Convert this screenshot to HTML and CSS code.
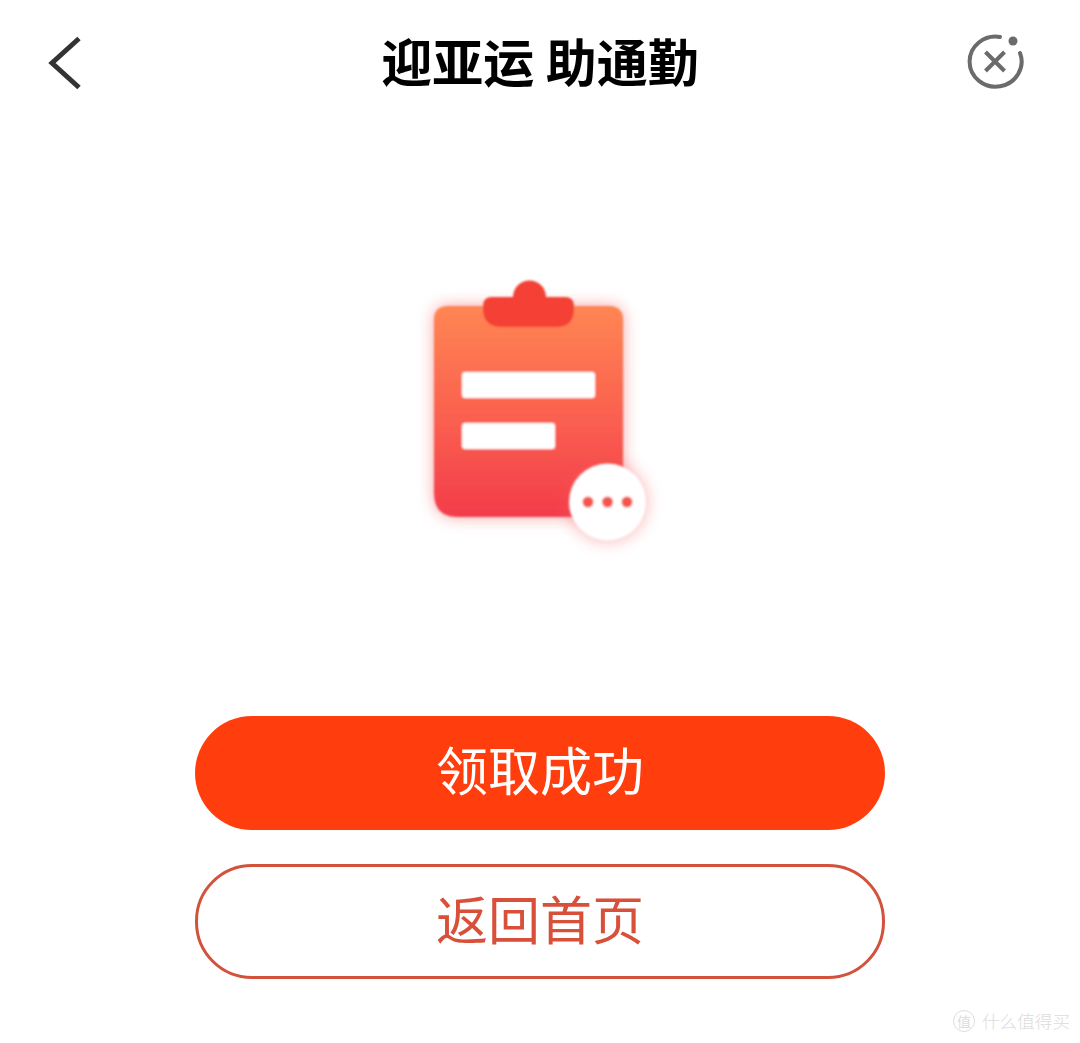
FILE: index.html
```html
<!DOCTYPE html>
<html lang="zh-CN">
<head>
<meta charset="utf-8">
<title>迎亚运 助通勤</title>
<link rel="stylesheet" href="styles.css">
</head>
<body>
<div class="page">
  <header class="nav">
    <svg class="nav-icon" width="36" height="60" viewBox="46 34 36 60" aria-label="返回">
      <path class="back-shape" d="M79 38.500 L52 63 L79 87.500"/>
    </svg>
    <h1 class="title">迎亚运 助通勤</h1>
    <svg class="nav-icon nav-end" width="58" height="60" viewBox="966 34 58 60" aria-label="关闭">
      <path class="close-ring" d="M1000 37 A26 25 0 1 0 1020 53"/>
      <circle class="close-dot" cx="1013" cy="41" r="4.500"/>
      <path class="close-x" d="M985.500 52 L1004.500 71 M1004.500 52 L985.500 71"/>
    </svg>
  </header>

  <main class="content">
    <svg class="clipboard" width="270" height="300" viewBox="405 260 270 300" role="img" aria-label="领取状态">
      <defs>
        <linearGradient id="board" x1="0" y1="0" x2="0" y2="1">
          <stop offset="0" stop-color="#ff8552"/>
          <stop offset="0.55" stop-color="#fa5f50"/>
          <stop offset="1" stop-color="#f33c4b"/>
        </linearGradient>
        <filter id="glow" x="-30%" y="-30%" width="160%" height="160%">
          <feGaussianBlur stdDeviation="8"/>
        </filter>
        <filter id="soft" x="-10%" y="-10%" width="120%" height="120%">
          <feGaussianBlur stdDeviation="0.800"/>
        </filter>
      </defs>
      <path d="M448 306 H609 Q623 306 623 320 V517 H458 Q434 517 434 493 V320 Q434 306 448 306 Z" fill="#f65a5a" opacity="0.55" filter="url(#glow)"/>
      <g filter="url(#soft)">
        <path d="M448 306 H609 Q623 306 623 320 V517 H458 Q434 517 434 493 V320 Q434 306 448 306 Z" fill="url(#board)"/>
        <path d="M513 297 A16.500 16.500 0 0 1 546 297 H565 Q574 297 574 306 V309 Q574 327 556 327 H503 Q483 327 483 309 V306 Q483 297 492 297 Z" fill="#f43f36"/>
        <rect x="462" y="372" width="133" height="26" rx="3" fill="#fff"/>
        <rect x="462" y="423" width="93" height="26" rx="3" fill="#fff"/>
      </g>
      <circle cx="607.500" cy="502" r="40" fill="#f65a5a" opacity="0.4" filter="url(#glow)"/>
      <g filter="url(#soft)">
        <circle cx="607.500" cy="502" r="38.500" fill="#fff"/>
        <circle cx="588" cy="502" r="5.500" fill="#f4574f"/>
        <circle cx="607.500" cy="502" r="5.500" fill="#f4574f"/>
        <circle cx="627" cy="502" r="5.500" fill="#f4574f"/>
      </g>
    </svg>

    <div class="actions">
      <button class="btn btn-primary" type="button"><span class="btn-label">领取成功</span></button>
      <button class="btn btn-outline" type="button"><span class="btn-label">返回首页</span></button>
    </div>
  </main>

  <div class="watermark">
    <span class="wm-logo">值</span>
    <span class="wm-text">什么值得买</span>
  </div>
</div>
</body>
</html>
```

FILE: styles.css
```css
* {
  box-sizing: border-box;
}

html,
body {
  margin: 0;
  padding: 0;
  background: #fff;
}

body {
  font-family: "Noto Sans CJK SC", "Noto Sans", sans-serif;
}

.page {
  position: relative;
  width: 1080px;
  height: 1043px;
  overflow: hidden;
  background: #fff;
}

.nav {
  display: grid;
  grid-template-columns: 1fr auto 1fr;
  align-items: center;
  height: 128px;
  padding: 0 46px;
}

.nav-icon {
  display: block;
}

.nav-end {
  justify-self: end;
  margin-right: 10px;
}

.back-shape {
  fill: none;
  stroke: #333;
  stroke-width: 5;
  stroke-linejoin: miter;
}

.close-ring {
  fill: none;
  stroke: #6b6b6b;
  stroke-width: 4;
  stroke-linecap: round;
}

.close-dot {
  fill: #6b6b6b;
}

.close-x {
  fill: none;
  stroke: #6b6b6b;
  stroke-width: 4;
}

.title {
  margin: 0 0 8px;
  font-size: 51px;
  font-weight: 700;
  line-height: 1;
  color: #000;
  white-space: nowrap;
  filter: blur(0.4px);
}

.content {
  display: flex;
  flex-direction: column;
  align-items: center;
}

.clipboard {
  display: block;
  margin-top: 132px;
  overflow: visible;
}

.actions {
  display: flex;
  flex-direction: column;
  gap: 34px;
  margin-top: 156px;
}

.btn {
  display: block;
  width: 690px;
  height: 114px;
  padding: 0 0 8px;
  border-radius: 57px;
  font-family: inherit;
  font-size: 52px;
  font-weight: 400;
  line-height: 1;
}

.btn-label {
  display: block;
  filter: blur(0.4px);
}

.btn-primary {
  border: 0;
  background: #ff3d0d;
  color: #fff;
}

.btn-outline {
  height: 115px;
  border: 3px solid #d2523c;
  background: #fff;
  color: #d8503a;
}

.watermark {
  position: absolute;
  right: 10px;
  bottom: 10px;
  display: flex;
  align-items: center;
  gap: 7px;
  color: #dcdcdc;
}

.wm-logo {
  display: flex;
  align-items: center;
  justify-content: center;
  width: 22px;
  height: 22px;
  border: 1px solid #dedede;
  border-radius: 50%;
  font-size: 14px;
  line-height: 1;
}

.wm-text {
  font-size: 17.600px;
  line-height: 24px;
  font-weight: 300;
}
```
